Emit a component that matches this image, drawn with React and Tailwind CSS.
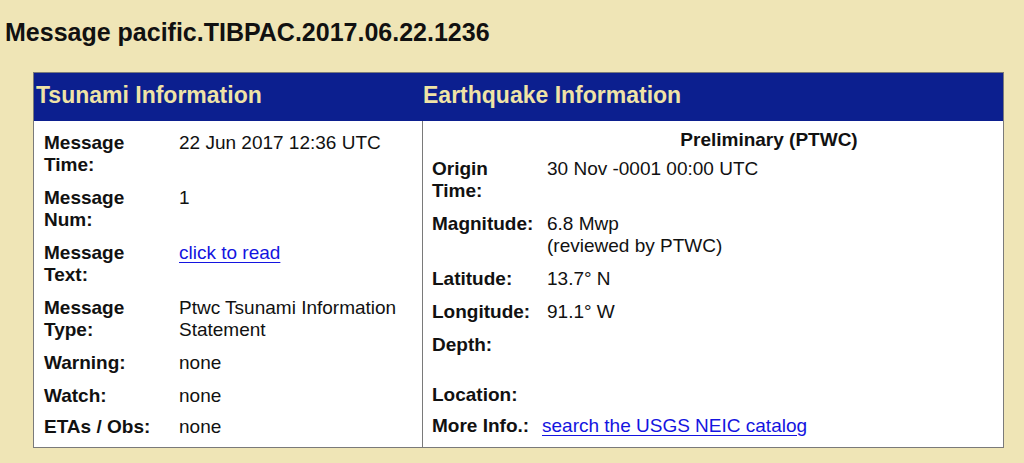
const tsunami = [
  { label: ["Message", "Time:"], value: ["22 Jun 2017 12:36 UTC"] },
  { label: ["Message", "Num:"], value: ["1"] },
  { label: ["Message", "Text:"], link: "click to read" },
  { label: ["Message", "Type:"], value: ["Ptwc Tsunami Information", "Statement"] },
  { label: ["Warning:"], value: ["none"] },
  { label: ["Watch:"], value: ["none"] },
  { label: ["ETAs / Obs:"], value: ["none"], last: true },
]

const quake = [
  { label: ["Origin", "Time:"], value: ["30 Nov -0001 00:00 UTC"] },
  { label: ["Magnitude:"], value: ["6.8 Mwp", "(reviewed by PTWC)"] },
  { label: ["Latitude:"], value: ["13.7° N"] },
  { label: ["Longitude:"], value: ["91.1° W"] },
  { label: ["Depth:"], value: [], tall: true },
  { label: ["Location:"], value: [] },
  { label: ["More Info.:"], link: "search the USGS NEIC catalog", shift: true, last: true },
]

function Lines({ items }) {
  return items.map((t, i) => <div key={i}>{t}</div>)
}

function Row({ row, labelW }) {
  return (
    <div className={`flex ${row.last ? "pt-[4px] pb-[5px]" : "py-[5.5px]"} ${row.tall ? "min-h-[50px]" : ""}`}>
      <div className={`${labelW} shrink-0 font-bold`}>
        <Lines items={row.label} />
      </div>
      <div className={`flex-1 ${row.shift ? "-ml-[5px]" : ""}`}>
        {row.link ? (
          <a href="#" className="text-[#1414e0] underline underline-offset-[3px]">
            {row.link}
          </a>
        ) : (
          <Lines items={row.value} />
        )}
      </div>
    </div>
  )
}

export default function App() {
  return (
    <div
      className="min-h-[463px] w-[1024px] bg-[#efe5b6] text-[#111] overflow-hidden"
      style={{ fontFamily: '"Liberation Sans", Arial, sans-serif' }}
    >
      <h1 className="pl-[5px] pt-[17px] text-[25px] leading-[30px] font-bold">
        Message pacific.TIBPAC.2017.06.22.1236
      </h1>

      <div className="ml-[33px] mt-[25px] w-[971px] border border-[#7a7a7a] bg-white">
        {/* header band */}
        <div className="flex h-[48px] items-center pb-[3px] bg-[#0c1f8f] text-[23px] font-bold text-[#efe3a6]">
          <div className="w-[389px] pl-[2px]">Tsunami Information</div>
          <div className="flex-1">Earthquake Information</div>
        </div>

        <div className="flex text-[19px] leading-[22px]">
          {/* left column */}
          <div className="w-[389px] border-r border-[#7a7a7a] pl-[10px] pt-[5px] pb-[4px]">
            {tsunami.map((r, i) => (
              <Row key={i} row={r} labelW="w-[135px]" />
            ))}
          </div>

          {/* right column */}
          <div className="flex-1 pl-[9px] pt-[5px] pb-[4px]">
            <div className="flex pt-[3px] pb-[1px]">
              <div className="w-[115px] shrink-0" />
              <div className="flex-1 pr-[12px] text-center font-bold">Preliminary (PTWC)</div>
            </div>
            {quake.map((r, i) => (
              <Row key={i} row={r} labelW="w-[115px]" />
            ))}
          </div>
        </div>
      </div>
    </div>
  )
}
